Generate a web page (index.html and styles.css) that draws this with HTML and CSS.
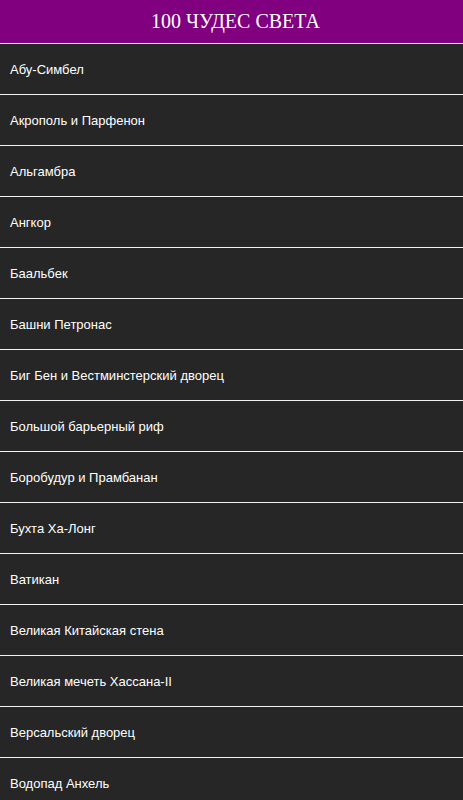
FILE: index.html
```html
<!DOCTYPE html>
<html lang="ru">
<head>
<meta charset="utf-8">
<title>100 ЧУДЕС СВЕТА</title>
<link rel="stylesheet" href="styles.css">
</head>
<body>
<header class="bar">100 ЧУДЕС СВЕТА</header>
<ul class="list">
<li class="item">Абу-Симбел</li>
<li class="item">Акрополь и Парфенон</li>
<li class="item">Альгамбра</li>
<li class="item">Ангкор</li>
<li class="item">Баальбек</li>
<li class="item">Башни Петронас</li>
<li class="item">Биг Бен и Вестминстерский дворец</li>
<li class="item">Большой барьерный риф</li>
<li class="item">Боробудур и Прамбанан</li>
<li class="item">Бухта Ха-Лонг</li>
<li class="item">Ватикан</li>
<li class="item">Великая Китайская стена</li>
<li class="item">Великая мечеть Хассана-II</li>
<li class="item">Версальский дворец</li>
<li class="item">Водопад Анхель</li>
</ul>
</body>
</html>
```
FILE: styles.css
```css
html, body {
  margin: 0;
  padding: 0;
  background: #262626;
}
.bar {
  height: 44px;
  box-sizing: border-box;
  background: #800080;
  color: #fff;
  font-family: "Liberation Serif", serif;
  font-size: 20px;
  padding-left: 8px;
  display: flex;
  align-items: center;
  justify-content: center;
  border-bottom: 1px solid #f2f2f2;
}
.list {
  list-style: none;
  margin: 0;
  padding: 0;
}
.item {
  height: 50px;
  display: flex;
  align-items: center;
  padding: 0 10px;
  color: #fff;
  font-family: "Liberation Sans", Arial, sans-serif;
  font-size: 13px;
  border-bottom: 1px solid #f2f2f2;
}
```
